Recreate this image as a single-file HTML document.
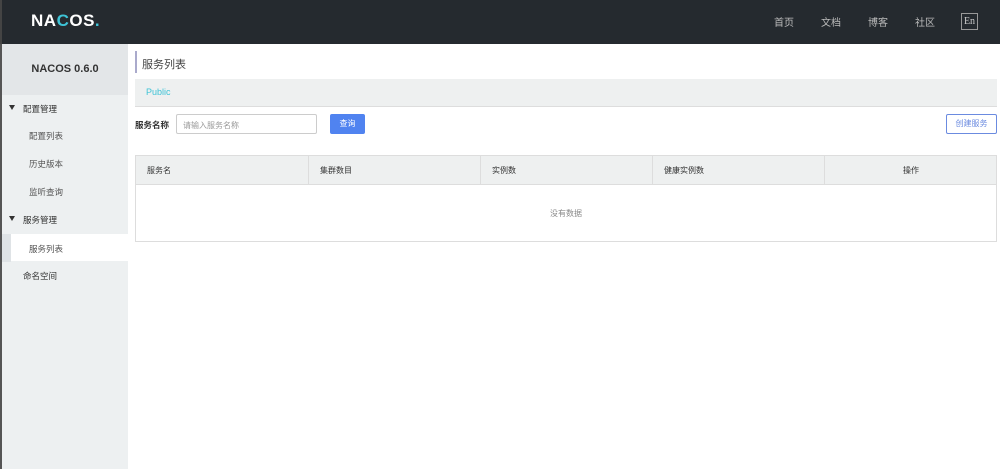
<!DOCTYPE html>
<html><head><meta charset="utf-8"><style>
*{box-sizing:border-box;margin:0;padding:0}
body{width:1000px;height:469px;overflow:hidden;background:#fff;font-family:"Liberation Sans","Noto Sans CJK SC",sans-serif;font-size:9px;color:#333;position:relative}
.top{position:absolute;left:0;top:0;width:1000px;height:44px;background:#252a2f;border-left:2px solid #444}
.logo{position:absolute;left:29px;top:11px;color:#fff;font-weight:bold;font-size:17px;letter-spacing:0.5px}
.logo i{font-style:normal;color:#3ec3d6}
.nav{position:absolute;top:14px;color:#bbb;font-size:10px}
.en{position:absolute;left:959px;top:13px;width:17px;height:17px;border:1px solid #999;color:#ccc;font-size:10px;text-align:center;line-height:15px;font-family:"Liberation Serif",serif}
.side{position:absolute;left:0;top:44px;width:128px;height:425px;background:#edf0f1;border-left:2px solid #555}
.sh{height:51px;background:#e3e6e8;text-align:center;line-height:51px;font-weight:bold;font-size:11px;color:#333}
.it{position:absolute;font-size:8.5px;color:#555}
.tri{position:absolute;width:0;height:0;border-left:3.5px solid transparent;border-right:3.5px solid transparent;border-top:5px solid #333}
.act{position:absolute;left:2px;top:234px;width:126px;height:27px;background:#fff}
.main{position:absolute;left:135px}
</style></head><body>
<div class="top"><div class="logo">NA<i>C</i>OS<i>.</i></div>
<span class="nav" style="left:772px">首页</span><span class="nav" style="left:819px">文档</span><span class="nav" style="left:866px">博客</span><span class="nav" style="left:913px">社区</span>
<div class="en">En</div></div>
<div class="side"><div class="sh">NACOS 0.6.0</div></div>
<div class="act"></div>
<div style="position:absolute;left:2px;top:234px;width:9px;height:28px;background:#dfe3e6"></div>
<div class="tri" style="left:9px;top:105px"></div><span class="it" style="left:23px;top:103px;color:#333">配置管理</span>
<span class="it" style="left:29px;top:130px">配置列表</span>
<span class="it" style="left:29px;top:158px">历史版本</span>
<span class="it" style="left:29px;top:186px">监听查询</span>
<div class="tri" style="left:9px;top:216px"></div><span class="it" style="left:23px;top:214px;color:#333">服务管理</span>
<span class="it" style="left:29px;top:243px">服务列表</span>
<span class="it" style="left:23px;top:270px;color:#333">命名空间</span>
<div style="position:absolute;left:135px;top:51px;width:2px;height:22px;background:#aac"></div>
<span class="main" style="left:142px;top:56px;font-size:11px;color:#444">服务列表</span>
<div style="position:absolute;left:135px;top:79px;width:862px;height:28px;background:#eef0f0;border-bottom:1px solid #ddd"></div>
<span class="main" style="left:146px;top:87px;color:#3ec3d6">Public</span>
<span class="main" style="top:119px;font-weight:bold;font-size:8.5px">服务名称</span>
<div style="position:absolute;left:176px;top:114px;width:141px;height:20px;border:1px solid #ccc;border-radius:2px;font-size:8px;color:#999;padding:5px 6px">请输入服务名称</div>
<div style="position:absolute;left:330px;top:114px;width:35px;height:20px;background:#5083f0;border-radius:2px;color:#fff;font-size:8px;text-align:center;line-height:20px">查询</div>
<div style="position:absolute;left:946px;top:114px;width:51px;height:20px;border:1px solid #6b8be0;border-radius:2px;color:#6b8be0;font-size:8px;text-align:center;line-height:18px">创建服务</div>
<div style="position:absolute;left:135px;top:155px;width:862px;height:87px;border:1px solid #ddd"></div>
<div style="position:absolute;left:136px;top:156px;width:860px;height:29px;background:#eef0f0;border-bottom:1px solid #ddd"></div>
<div style="position:absolute;left:308px;top:156px;width:1px;height:29px;background:#ddd"></div>
<div style="position:absolute;left:480px;top:156px;width:1px;height:29px;background:#ddd"></div>
<div style="position:absolute;left:652px;top:156px;width:1px;height:29px;background:#ddd"></div>
<div style="position:absolute;left:824px;top:156px;width:1px;height:29px;background:#ddd"></div>
<span class="main" style="left:147px;top:165px;font-size:8px">服务名</span>
<span class="main" style="left:320px;top:165px;font-size:8px">集群数目</span>
<span class="main" style="left:492px;top:165px;font-size:8px">实例数</span>
<span class="main" style="left:664px;top:165px;font-size:8px">健康实例数</span>
<span class="main" style="left:903px;top:165px;font-size:8px">操作</span>
<span class="main" style="left:550px;top:208px;font-size:8px;color:#888">没有数据</span>
</body></html>
